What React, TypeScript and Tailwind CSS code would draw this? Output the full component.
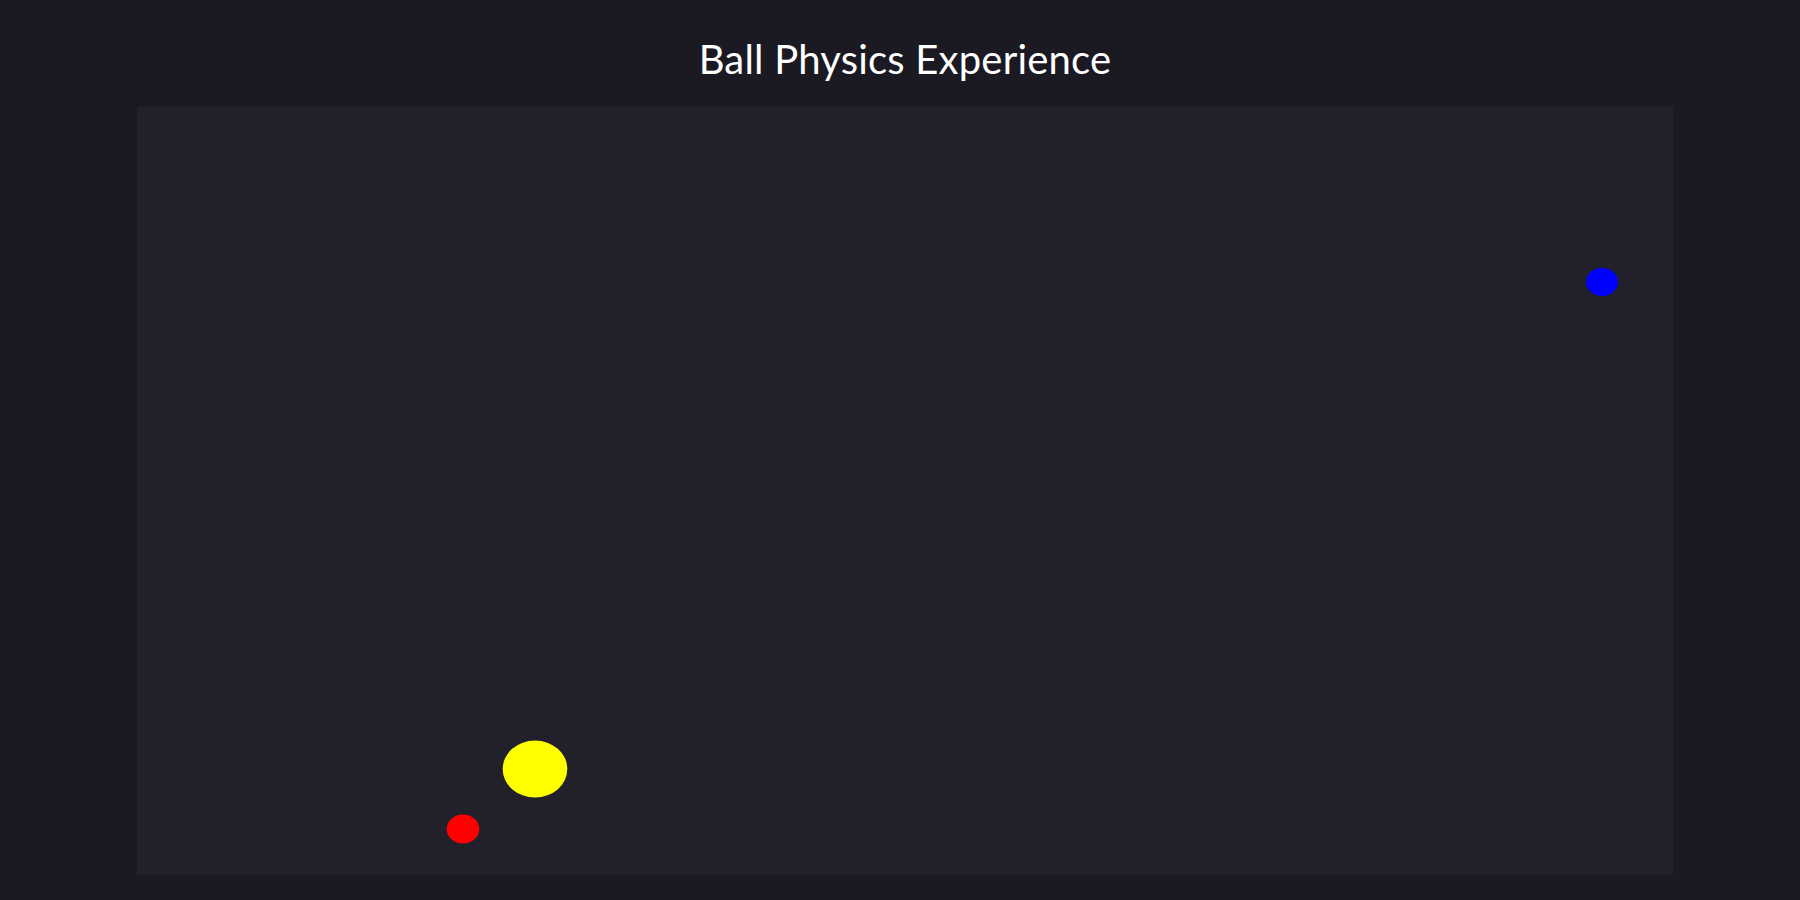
import React from "react";

export default function App() {
  return (
    <div className="min-h-[900px] w-full bg-[#1b1a23] flex flex-col items-center pl-[10px]" style={{ fontFamily: "Lato, 'Noto Sans', sans-serif" }}>
      <h1 className="text-white text-[40px] leading-[47px] font-normal mt-[36px] mb-[24px] tracking-[0.2px]">
        Ball Physics Experience
      </h1>
      <div className="w-[1536px] h-[768px] bg-[#22212b]">
        <svg width="1536" height="768" viewBox="0 0 1536 768">
          <ellipse cx="1465" cy="175" rx="16" ry="14" fill="#0000ff" />
          <ellipse cx="398" cy="662" rx="32.3" ry="28.5" fill="#ffff00" />
          <ellipse cx="326" cy="722" rx="16.3" ry="14.5" fill="#ff0000" />
        </svg>
      </div>
    </div>
  );
}
